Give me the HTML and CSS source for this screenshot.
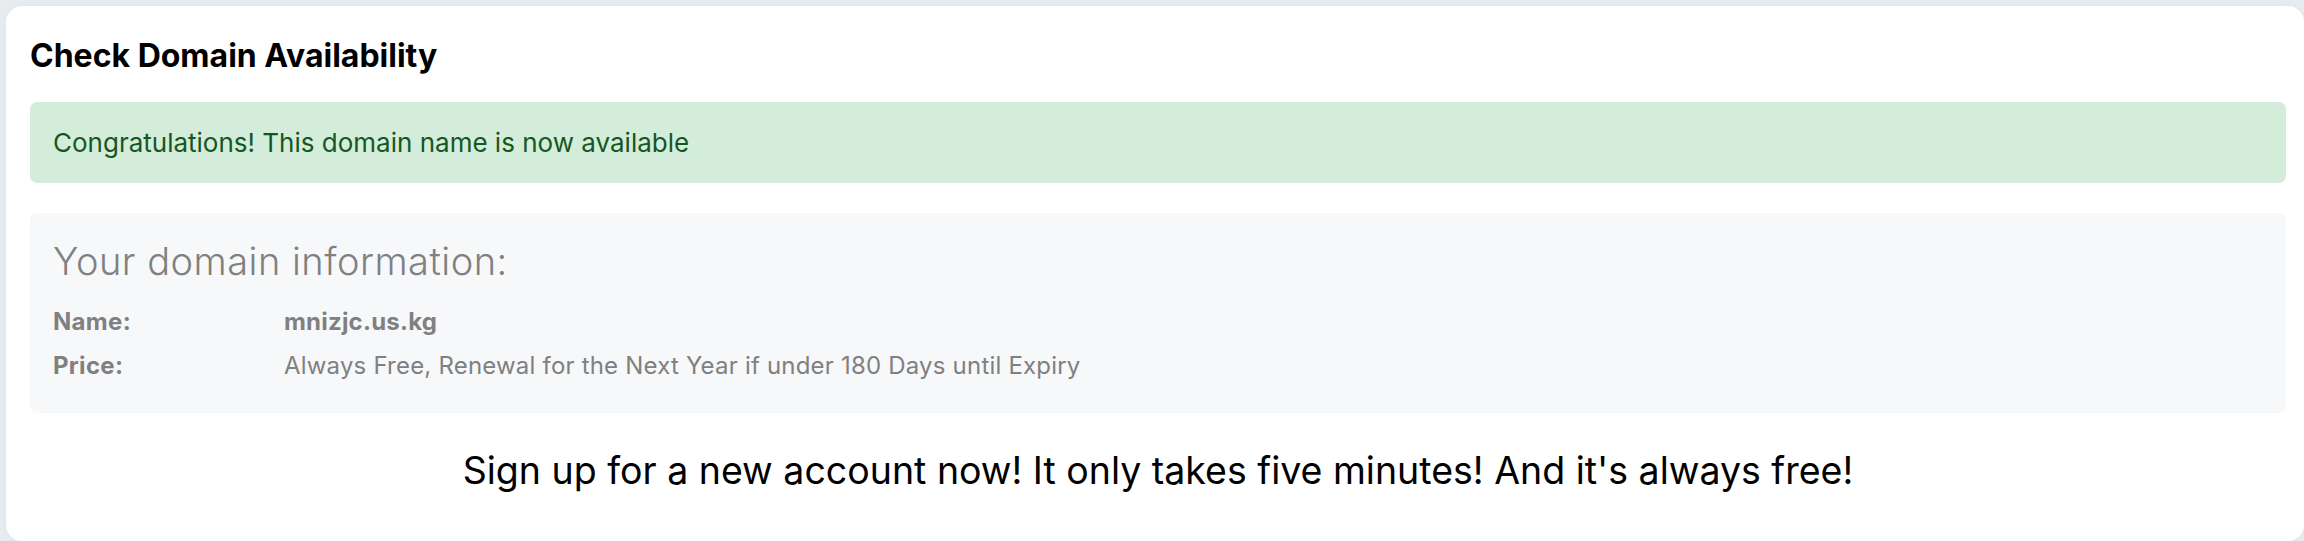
FILE: index.html
```html
<!DOCTYPE html>
<html lang="en">
<head>
  <meta charset="UTF-8" />
  <meta name="viewport" content="width=device-width, initial-scale=1.0"/>
  <title>Check Domain Availability</title>
  <link rel="stylesheet" href="styles.css">
</head>
<body>

  <div class="card">
    <h1 class="card-title">Check Domain Availability</h1>

    <div class="alert-success">Congratulations! This domain name is now available</div>

    <div class="domain-info">
      <h4>Your domain information:</h4>
      <div class="info-row">
        <span class="info-label">Name:</span>
        <span class="info-value strong">mnizjc.us.kg</span>
      </div>
      <div class="info-row">
        <span class="info-label">Price:</span>
        <span class="info-value">Always Free, Renewal for the Next Year if under 180 Days until Expiry</span>
      </div>
    </div>

    <p class="signup">Sign up for a new account now! It only takes five minutes! And it's always free!</p>
  </div>

</body>
</html>
```

FILE: styles.css
```css
* {
  box-sizing: border-box;
}

body {
  margin: 0;
  padding: 6px 0 0 6px;
  background: #e7ecf0;
  font-family: Inter, 'Open Sans', sans-serif;
  overflow: hidden;
}

.card {
  width: 2298px;
  height: 535px;
  background: #fff;
  border-radius: 16px;
  box-shadow: 0 0 8px rgba(0, 0, 0, 0.04);
  padding: 32px 18px 0 24px;
}

.card-title {
  margin: 0 0 28px;
  font-size: 32px;
  line-height: 36px;
  font-weight: 700;
  color: #000;
}

.alert-success {
  background: #d4edda;
  color: #155724;
  border-radius: 7px;
  padding: 22px 23px;
  font-size: 26px;
  line-height: 37px;
  margin-bottom: 30px;
}

.domain-info {
  background: #f7f8fa;
  border-radius: 7px;
  padding: 26px 23px 25px;
  color: #808080;
}

.domain-info h4 {
  margin: 0 0 17px;
  font-size: 38px;
  line-height: 44px;
  font-weight: 300;
  letter-spacing: 0.5px;
}

.info-row {
  display: flex;
  font-size: 24px;
  line-height: 44px;
}

.info-label {
  width: 231px;
  font-weight: 700;
  letter-spacing: 0.3px;
}

.info-value {
  letter-spacing: 0.2px;
}

.info-value.strong {
  font-weight: 700;
}

.signup {
  margin: 36px 0 0;
  text-align: center;
  font-size: 37.5px;
  line-height: 44px;
  color: #000;
}
```
